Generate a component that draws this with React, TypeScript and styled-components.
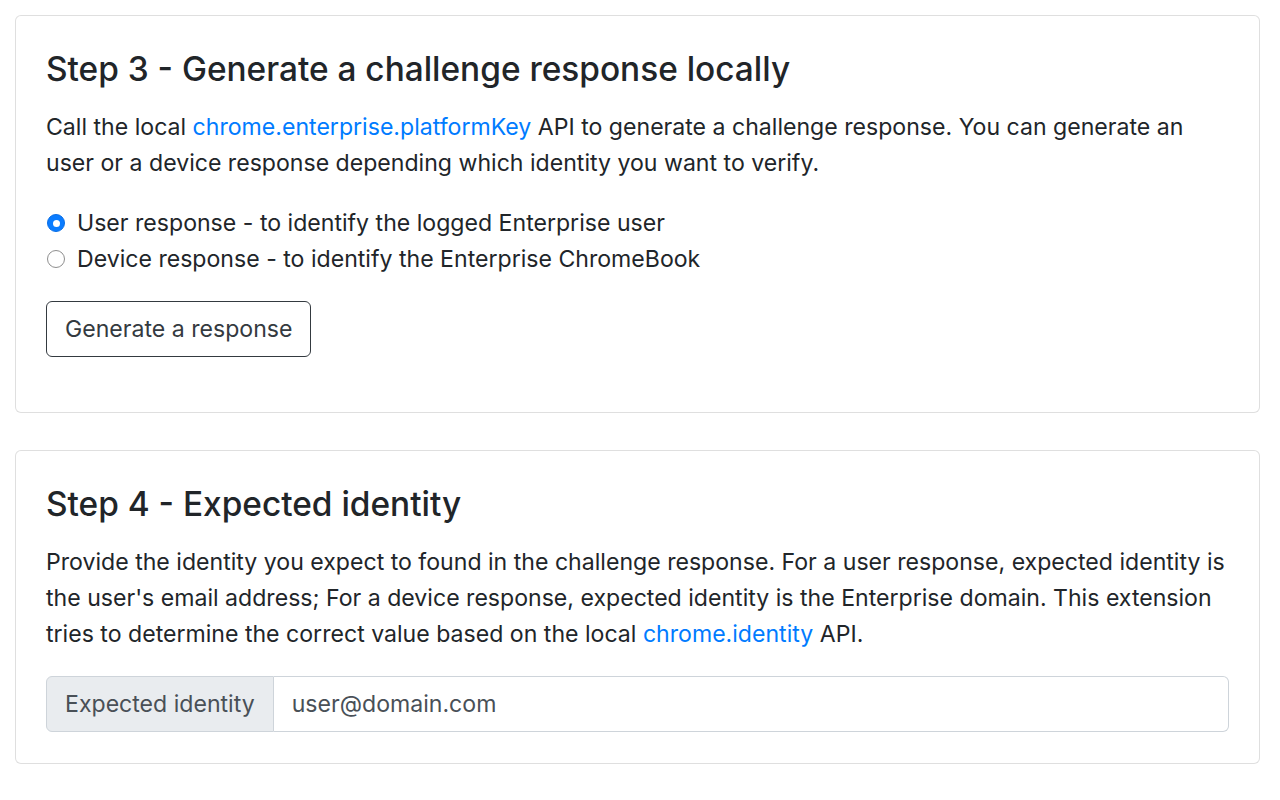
import React from "react";
import styled, { createGlobalStyle } from "styled-components";

const GlobalStyle = createGlobalStyle`
  html, body { margin: 0; padding: 0; background: #fff; }
  body {
    font-family: Inter, "Noto Sans", "Liberation Sans", sans-serif;
    font-size: 23.1px;
    line-height: 1.5;
    color: #212529;
  }
  * { box-sizing: border-box; }
`;

const Page = styled.div`
  padding: 15px 20px 0 15px;
`;

const Card = styled.section`
  border: 1.5px solid rgba(0, 0, 0, 0.125);
  border-radius: 6px;
  padding: 32px 30px 31px 30px;
  margin-bottom: 37px;
  background: #fff;
`;

const Title = styled.h4`
  margin: 0 0 18px 0;
  font-size: 33.4px;
  font-weight: 500;
  line-height: 43px;
  color: #212529;
`;

const Text = styled.p`
  margin: 0 0 24px 0;
  font-size: 23.1px;
  line-height: 36px;
`;

const Link = styled.a`
  color: #007bff;
  text-decoration: none;
`;

const RadioList = styled.div`
  margin-bottom: 24px;
`;

const RadioRow = styled.label`
  display: flex;
  align-items: center;
  gap: 12px;
  font-size: 23.1px;
  line-height: 36px;
  padding-left: 1px;
`;

const RadioDot = styled.span<{ $checked?: boolean }>`
  width: 18px;
  height: 18px;
  border-radius: 50%;
  flex: none;
  display: inline-flex;
  align-items: center;
  justify-content: center;
  background: ${(p) => (p.$checked ? "#0a7cff" : "#fff")};
  border: 1px solid ${(p) => (p.$checked ? "#0a6fe6" : "#8e8e8e")};
  &::after {
    content: "";
    width: 7px;
    height: 7px;
    border-radius: 50%;
    background: #fff;
    display: ${(p) => (p.$checked ? "block" : "none")};
  }
`;

const Button = styled.button`
  font-family: inherit;
  font-size: 23.1px;
  line-height: 36px;
  padding: 9px 18px;
  color: #343a40;
  background: transparent;
  border: 1.5px solid #343a40;
  border-radius: 6px;
  cursor: pointer;
  margin-bottom: 24px;
`;

const InputGroup = styled.div`
  display: flex;
  align-items: stretch;
  height: 56px;
`;

const Addon = styled.span`
  display: flex;
  align-items: center;
  padding: 0 18px;
  font-size: 23.1px;
  color: #495057;
  background: #e9ecef;
  border: 1.5px solid #ced4da;
  border-radius: 6px 0 0 6px;
  white-space: nowrap;
`;

const Input = styled.input`
  flex: 1;
  min-width: 0;
  font-family: inherit;
  font-size: 23.1px;
  color: #495057;
  padding: 0 18px;
  border: 1.5px solid #ced4da;
  border-left: none;
  border-radius: 0 6px 6px 0;
  outline: none;
  background: #fff;
`;

export default function App() {
  return (
    <>
      <GlobalStyle />
      <Page>
        <Card>
          <Title>Step 3 - Generate a challenge response locally</Title>
          <Text>
            Call the local <Link href="#">chrome.enterprise.platformKey</Link> API to generate a
            challenge response. You can generate an user or a device response depending which
            identity you want to verify.
          </Text>
          <RadioList>
            <RadioRow>
              <RadioDot $checked />
              User response - to identify the logged Enterprise user
            </RadioRow>
            <RadioRow>
              <RadioDot />
              Device response - to identify the Enterprise ChromeBook
            </RadioRow>
          </RadioList>
          <Button type="button">Generate a response</Button>
        </Card>
        <Card>
          <Title>Step 4 - Expected identity</Title>
          <Text>
            Provide the identity you expect to found in the challenge response. For a user
            response, expected identity is the user's email address; For a device response,
            expected identity is the Enterprise domain. This extension tries to determine the
            correct value based on the local <Link href="#">chrome.identity</Link> API.
          </Text>
          <InputGroup>
            <Addon>Expected identity</Addon>
            <Input defaultValue="user@domain.com" />
          </InputGroup>
        </Card>
      </Page>
    </>
  );
}
